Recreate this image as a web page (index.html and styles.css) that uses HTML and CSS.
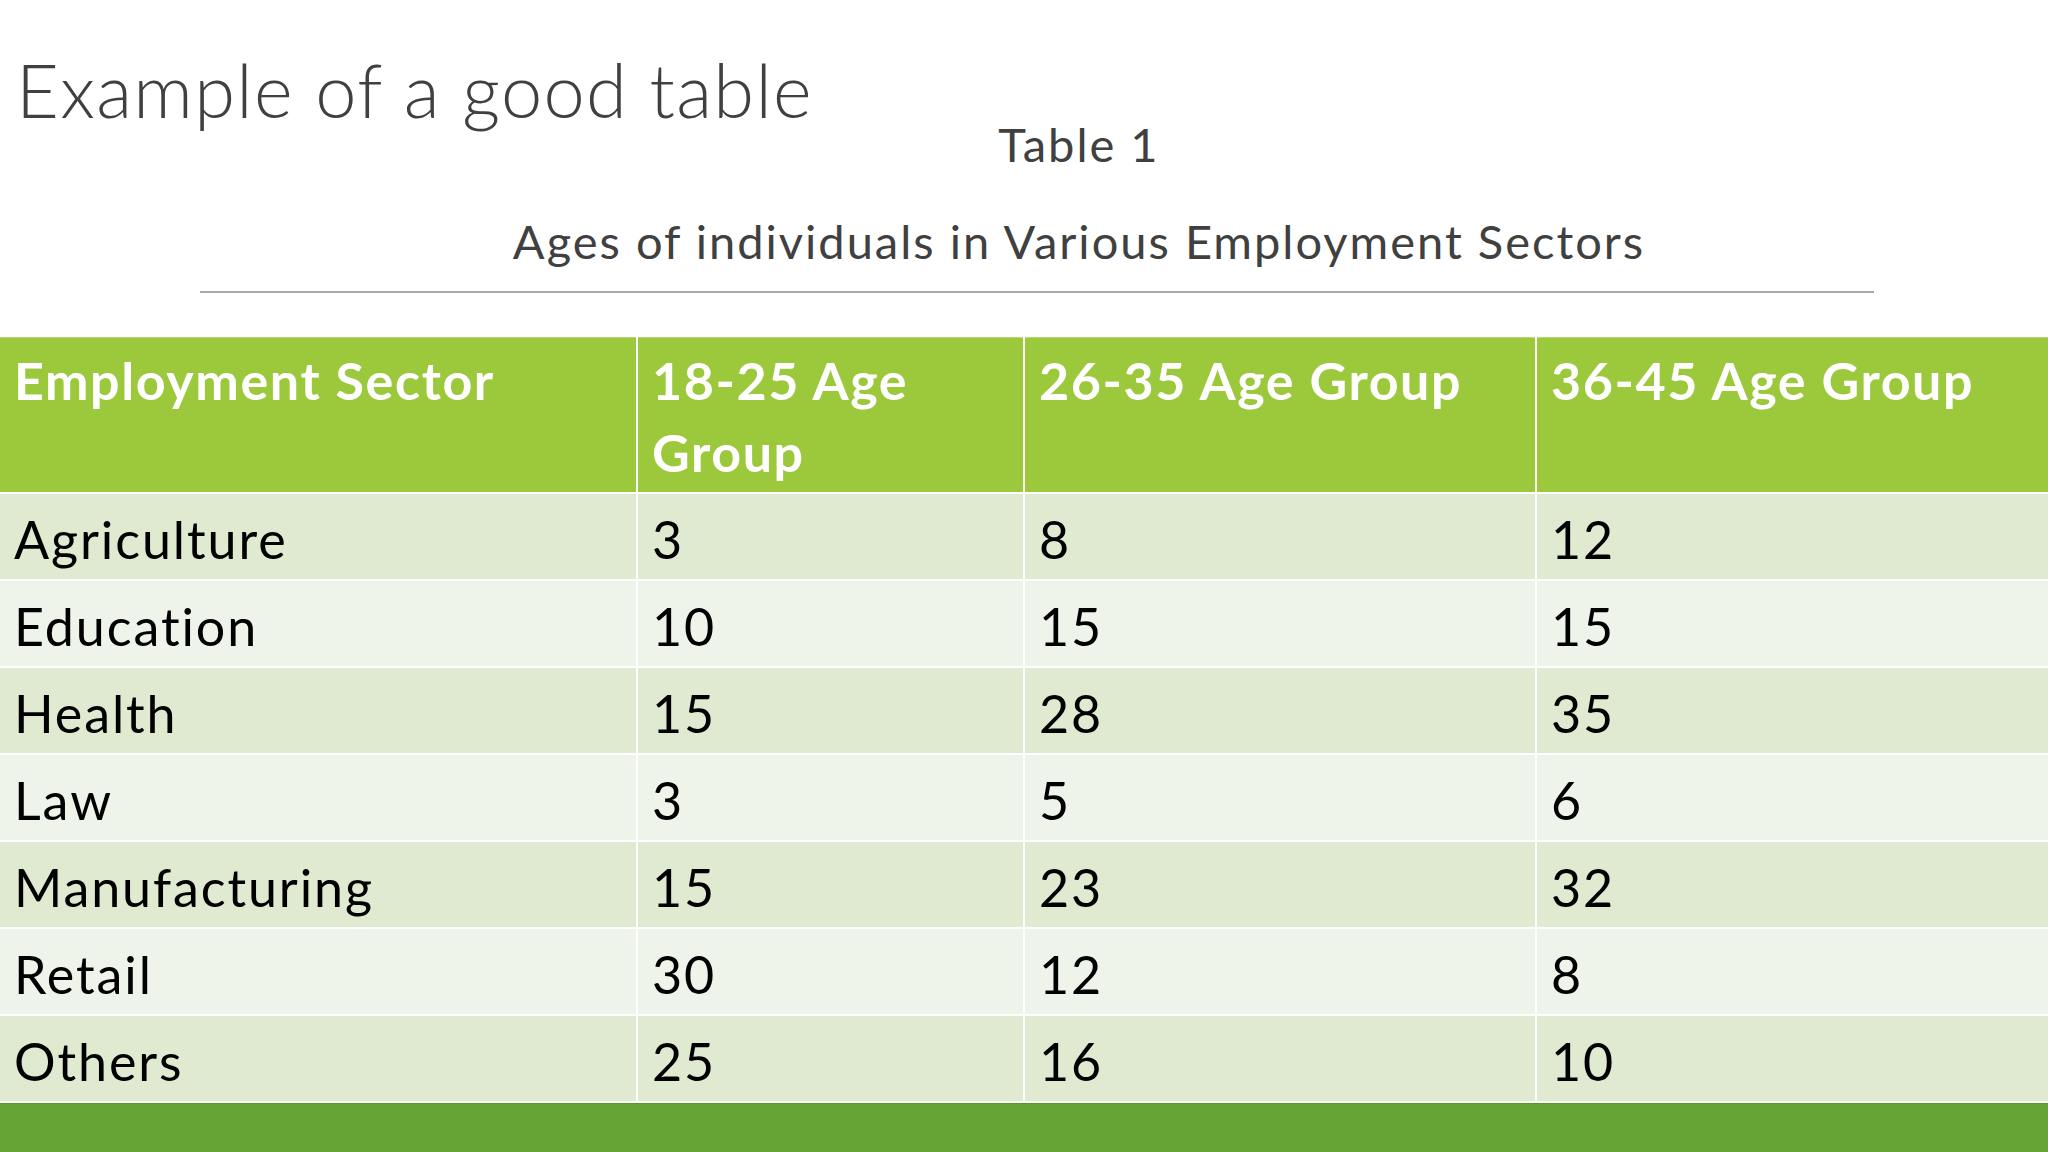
FILE: index.html
```html
<!DOCTYPE html>
<html lang="en">
<head>
<meta charset="utf-8">
<title>Example of a good table</title>
<link rel="stylesheet" href="styles.css">
</head>
<body>
<main class="slide">
  <h1 class="title">Example of a good table</h1>
  <div class="caption">
    <p class="caption-num">Table 1</p>
    <p class="caption-text">Ages of individuals in Various Employment Sectors</p>
  </div>
  <hr class="rule">
  <div class="grid">
    <div class="cell head">Employment Sector</div>
    <div class="cell head">18-25 Age Group</div>
    <div class="cell head">26-35 Age Group</div>
    <div class="cell head">36-45 Age Group</div>

    <div class="cell band1">Agriculture</div>
    <div class="cell band1">3</div>
    <div class="cell band1">8</div>
    <div class="cell band1">12</div>

    <div class="cell band2">Education</div>
    <div class="cell band2">10</div>
    <div class="cell band2">15</div>
    <div class="cell band2">15</div>

    <div class="cell band1">Health</div>
    <div class="cell band1">15</div>
    <div class="cell band1">28</div>
    <div class="cell band1">35</div>

    <div class="cell band2">Law</div>
    <div class="cell band2">3</div>
    <div class="cell band2">5</div>
    <div class="cell band2">6</div>

    <div class="cell band1">Manufacturing</div>
    <div class="cell band1">15</div>
    <div class="cell band1">23</div>
    <div class="cell band1">32</div>

    <div class="cell band2">Retail</div>
    <div class="cell band2">30</div>
    <div class="cell band2">12</div>
    <div class="cell band2">8</div>

    <div class="cell band1">Others</div>
    <div class="cell band1">25</div>
    <div class="cell band1">16</div>
    <div class="cell band1">10</div>
  </div>
  <div class="bar"></div>
</main>
</body>
</html>
```

FILE: styles.css
```css
html, body {
  margin: 0;
  padding: 0;
  background: #ffffff;
}

body {
  width: 2048px;
  height: 1152px;
  overflow: hidden;
  font-family: Lato, "Open Sans", "Liberation Sans", sans-serif;
}

.slide {
  display: flex;
  flex-direction: column;
  width: 2048px;
  height: 1152px;
}

.title {
  margin: 60px 0 0 0;
  padding-left: 16px;
  font-size: 74px;
  font-weight: 300;
  line-height: 60px;
  height: 60px;
  color: #404040;
  letter-spacing: 1.3px;
}

.caption {
  padding-left: 110px;
  text-align: center;
  color: #404040;
  font-weight: 400;
  font-size: 47px;
  letter-spacing: 2px;
}

.caption p {
  margin: 0;
  line-height: 40px;
  height: 40px;
}

.caption-num {
  padding-top: 4px;
}

.caption-text {
  margin-top: 57px !important;
}

.rule {
  margin: 30px 0 0 200px;
  width: 1674px;
  height: 0;
  border: 0;
  border-top: 2px solid #a9a9a9;
}

.grid {
  margin-top: 44px;
  display: grid;
  grid-template-columns: 636px 385px 510px 1fr;
  grid-template-rows: 155px repeat(7, 85px);
  column-gap: 2px;
  row-gap: 2px;
  background: #ffffff;
}

.cell {
  padding: 9px 10px 0 14px;
  font-size: 52px;
  line-height: 72px;
  letter-spacing: 1.9px;
  color: #000000;
  box-sizing: border-box;
  overflow: hidden;
}

.head {
  padding-top: 6px;
  margin-bottom: 3px;
  height: 155px;
  background: #9bc93b;
  border-top: 1px solid #b6d877;
  color: #ffffff;
  font-weight: 700;
  letter-spacing: 1.6px;
}

.band1 {
  background: #dfead0;
}

.band2 {
  background: #eef4e9;
}

.bar {
  margin-top: 2px;
  flex: 1;
  background: #66a335;
  border-top: 1px solid #5b9530;
}
```
